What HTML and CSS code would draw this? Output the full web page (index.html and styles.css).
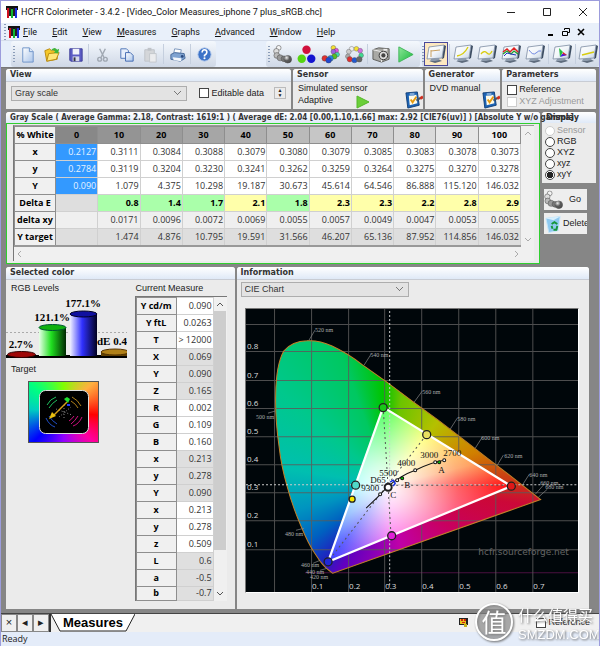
FILE: index.html
```html
<!DOCTYPE html>
<html lang="en">
<head>
<meta charset="utf-8">
<title>HCFR Colorimeter</title>
<link rel="stylesheet" href="styles.css">
</head>
<body>
<svg class="defs" aria-hidden="true">
  <defs>
    <linearGradient id="gBlue" x1="0" y1="0" x2="1" y2="1"><stop offset="0" stop-color="#fff"/><stop offset="1" stop-color="#a9c4ea"/></linearGradient>
    <linearGradient id="gPlay" x1="0" y1="0" x2="1" y2="1"><stop offset="0" stop-color="#8fe69a"/><stop offset="1" stop-color="#14b83a"/></linearGradient>
    <linearGradient id="gScreen" x1="0" y1="0" x2="1" y2="1"><stop offset="0" stop-color="#fff"/><stop offset=".5" stop-color="#f2f6fa"/><stop offset="1" stop-color="#c4d2e2"/></linearGradient>
    <radialGradient id="gBall" cx=".35" cy=".3" r=".8"><stop offset="0" stop-color="#fff" stop-opacity=".9"/><stop offset=".5" stop-color="#fff" stop-opacity=".1"/><stop offset="1" stop-color="#000" stop-opacity=".35"/></radialGradient>
    <symbol id="logo" viewBox="0 0 12 12"><path d="M0 0h12v4H0z" fill="#111"/><path d="M1 2h2v10H1z" fill="#d01020"/><path d="M5 3h2v9H5z" fill="#10b830"/><path d="M9 2h2v10H9z" fill="#1a2ce0"/><path d="M3 2h2v8H3zM7 2h2v8H7z" fill="#222"/></symbol>
    <symbol id="monitor" viewBox="0 0 22 20"><path d="M6 15l8-1 1 3-5 1-5-1z" fill="#8d9bac"/><path d="M4 17l6 2 7-2-2-1-5 1z" fill="#5e6b7c"/><path d="M19 1l2 1-2 12-2 1z" fill="#3b4b60"/><path d="M4 3L19 1 17 14 2 15z" fill="url(#gScreen)" stroke="#7c8ca2" stroke-width=".8"/></symbol>
    <symbol id="clip" viewBox="0 0 19 19"><path d="M1 2l12-1 2 14-12 3z" fill="#1c63b5" stroke="#124078"/><path d="M4 5l8-1 1 9-8 2z" fill="#fffbe8"/><path d="M5 2h5v3H5z" fill="#7aa6d6"/><path d="M6 9l2 3 4-6" fill="none" stroke="#e69a10" stroke-width="2"/><path d="M12 10l5-3" stroke="#456" stroke-width="2"/><path d="M16 8l3-2" stroke="#d03020" stroke-width="3"/></symbol>
    <symbol id="chain" viewBox="0 0 20 20"><g stroke="#555" stroke-width=".6"><circle cx="6" cy="3" r="2.500" fill="#f4f4f4"/><circle cx="3.500" cy="6.500" r="2.800" fill="#ddd"/><circle cx="4" cy="11" r="3" fill="#bbb"/><circle cx="7.500" cy="13.500" r="3.200" fill="#999"/><circle cx="11.500" cy="14.500" r="3" fill="#777"/><circle cx="15.500" cy="15" r="4" fill="#444"/></g><circle cx="15.500" cy="15" r="4" fill="url(#gBall)"/></symbol>
  </defs>
</svg>

<header class="titlebar">
  <svg class="logo"><use href="#logo"/></svg>
  <h1>HCFR Colorimeter - 3.4.2 - [Video_Color Measures_iphone 7 plus_sRGB.chc]</h1>
  <div class="winbtns">
    <button aria-label="Minimize"><svg viewBox="0 0 8 8"><path d="M0 4.5h8" stroke="#222"/></svg></button>
    <button aria-label="Maximize"><svg viewBox="0 0 8 8"><path d="M.5.5h7v7h-7z" fill="none" stroke="#222"/></svg></button>
    <button aria-label="Close"><svg viewBox="0 0 8 8"><path d="M0 0l8 8M8 0L0 8" stroke="#222"/></svg></button>
  </div>
</header>

<nav class="menubar">
  <i class="grip"></i>
  <svg class="logo"><use href="#logo"/></svg>
  <button><u>F</u>ile</button><button><u>E</u>dit</button><button><u>V</u>iew</button><button><u>M</u>easures</button><button><u>G</u>raphs</button><button><u>A</u>dvanced</button><button><u>W</u>indow</button><button><u>H</u>elp</button>
  <div class="mdibtns">
    <button aria-label="Minimize document"><svg viewBox="0 0 8 8"><path d="M1 7h5" stroke="#000" stroke-width="2"/></svg></button>
    <button aria-label="Restore document"><svg viewBox="0 0 8 8"><path d="M2.500 2V.5h5v4H6M.5 3.500h5v4h-5z" fill="none" stroke="#000"/></svg></button>
    <button aria-label="Close document"><svg viewBox="0 0 8 8"><path d="M1 1l6 6M7 1L1 7" stroke="#000" stroke-width="1.600"/></svg></button>
  </div>
</nav>

<div class="toolbar">
  <div class="group">
    <i class="grip"></i>
    <button aria-label="New"><svg viewBox="0 0 20 20"><path d="M5 3h7l4 4v11H5z" fill="url(#gBlue)" stroke="#6f93c8"/><path d="M12 3v4h4" fill="#dce8f8" stroke="#6f93c8"/></svg></button>
    <button aria-label="Open"><svg viewBox="0 0 20 20"><path d="M3 6l5-2 2 2h6v9L5 17z" fill="#f5c829" stroke="#b88a10"/><path d="M5 17l2-8 11-1-3 7z" fill="#ffe778" stroke="#b88a10"/><path d="M9 6q4-5 7-1l2-1-1 5-5-1 2-1q-2-3-5-1z" fill="#3fb53a"/></svg></button>
    <button aria-label="Save"><svg viewBox="0 0 20 20"><path d="M4 4h13v13H5l-1-1z" fill="#5b5bc4" stroke="#3c3c98"/><path d="M7 4h7v6H7z" fill="#f0f2fa"/><path d="M7 12h7v5H7z" fill="#d4d8ea"/><path d="M8 13h2v4H8z" fill="#334"/></svg></button>
    <i class="sep"></i>
    <button aria-label="Cut"><svg viewBox="0 0 20 20"><g fill="none" stroke="#a0a8b2" stroke-width="1.500"><path d="M7 4l5 10M13 4L8 14"/><circle cx="7" cy="15" r="2"/><circle cx="13" cy="15" r="2"/></g></svg></button>
    <button aria-label="Copy"><svg viewBox="0 0 20 20"><path d="M4 4h6l2 2v8H4z" fill="#e7effb" stroke="#5077b8"/><path d="M9 8h5l3 3v6H9z" fill="url(#gBlue)" stroke="#4068b0"/></svg></button>
    <button aria-label="Paste"><svg viewBox="0 0 20 20"><path d="M4 5h10v12H4z" fill="#d4d6d9" stroke="#bfc3c8"/><path d="M7 3h4v3H7z" fill="#bfc3c8"/><path d="M9 9h7v9H9z" fill="#ebecee" stroke="#c3c7cc"/></svg></button>
    <i class="sep"></i>
    <button aria-label="Print"><svg viewBox="0 0 20 20"><path d="M7 4l7 1-1 5-7-1z" fill="#fff" stroke="#7b97bd"/><path d="M3 10l4-2 10 1 1 5-5 3-10-2z" fill="#7fa3d1" stroke="#47699a"/><path d="M5 13l9 1v3l-8-1z" fill="#f3f7fc"/><circle cx="15" cy="12" r="1.500" fill="#2a4a80"/></svg></button>
    <i class="sep"></i>
    <button aria-label="Help"><svg viewBox="0 0 20 20"><circle cx="10" cy="10" r="7" fill="#3d73c8" stroke="#b9cdec"/><path d="M7.500 8q0-3 2.500-3t2.500 2.500Q12.500 9 10 11v1" fill="none" stroke="#fff" stroke-width="1.700"/><circle cx="10" cy="14" r="1.100" fill="#fff"/></svg></button>
  </div>
  <div class="group push">
    <i class="grip"></i>
    <button aria-label="Measure gray scale"><svg viewBox="0 0 20 20"><use href="#chain"/></svg></button>
    <button aria-label="Measure primaries"><svg viewBox="0 0 20 20"><circle cx="10" cy="5" r="4.400" fill="#d0103c"/><circle cx="5" cy="14.500" r="4.400" fill="#56d410"/><circle cx="15" cy="14.500" r="4.400" fill="#1414d0"/></svg></button>
    <button aria-label="Measure saturations"><svg viewBox="0 0 20 20"><g stroke="#444" stroke-width=".4"><circle cx="13" cy="3" r="2.500" fill="#f4e030"/><circle cx="16" cy="6" r="2.500" fill="#e050e0"/><circle cx="13" cy="7" r="2.500" fill="#9a60e0"/><circle cx="17" cy="10" r="2.500" fill="#40d8b0"/><circle cx="14" cy="12" r="2.800" fill="#58c020"/><circle cx="10" cy="14" r="3" fill="#208ce0"/><circle cx="4" cy="14" r="3" fill="#e03030"/><circle cx="8" cy="16" r="3" fill="#2048d0"/></g></svg></button>
    <button aria-label="Measure color checker"><svg viewBox="0 0 20 20"><g stroke="#555" stroke-width=".4"><circle cx="7" cy="4" r="2.500" fill="#eee"/><circle cx="4" cy="7" r="2.500" fill="#ccc"/><circle cx="12" cy="4" r="2.500" fill="#f4e030"/><circle cx="16" cy="6" r="2.500" fill="#d070e0"/><circle cx="17" cy="11" r="2.500" fill="#40d890"/><circle cx="3" cy="12" r="2.500" fill="#aaa"/><circle cx="5" cy="15" r="2.800" fill="#e03030"/><circle cx="10" cy="16" r="2.800" fill="#2058d0"/><circle cx="15" cy="15" r="3" fill="#666"/></g></svg></button>
    <i class="sep"></i>
    <button aria-label="Camera"><svg viewBox="0 0 20 20"><path d="M1 5l6-2 11 1v11l-8 3-9-3z" fill="#a9a9a5" stroke="#5c5c58"/><path d="M1 5l9 2v11" fill="none" stroke="#eee"/><circle cx="12" cy="11" r="4.500" fill="#ddd" stroke="#333"/><circle cx="12" cy="11" r="2.200" fill="#444"/><path d="M12 4h4v2h-4z" fill="#eee"/></svg></button>
    <button aria-label="Run"><svg viewBox="0 0 20 20"><path d="M3 2l15 8-15 8z" fill="url(#gPlay)" stroke="#3db556"/></svg></button>
  </div>
  <div class="group views">
    <i class="grip"></i>
    <button class="on" aria-label="Measures view"><svg viewBox="0 0 22 20"><use href="#monitor"/><path d="M6 7l9-1M6 6v7" stroke="#c9a060" fill="none"/></svg></button>
    <i class="sep"></i>
    <button aria-label="Luminance"><svg viewBox="0 0 22 20"><use href="#monitor"/><path d="M5 12q7-1 11-9" stroke="#d8cc10" stroke-width="1.300" fill="none"/></svg></button>
    <button aria-label="Gamma"><svg viewBox="0 0 22 20"><use href="#monitor"/><path d="M5 10q3-4 6-1t5-2" stroke="#d8cc10" stroke-width="1.300" fill="none"/></svg></button>
    <button aria-label="RGB levels"><svg viewBox="0 0 22 20"><use href="#monitor"/><path d="M3 8l4-3 3 3 4-4 4 4" stroke="#e02020" stroke-width="1.500" fill="none"/><path d="M3 10l4-3 4 3 3-3 4 3" stroke="#20a030" stroke-width="1.300" fill="none"/><path d="M4 12l3-3 4 1 5 1" stroke="#2030c0" fill="none"/></svg></button>
    <button aria-label="Color temperature"><svg viewBox="0 0 22 20"><use href="#monitor"/><path d="M5 6q4 6 7 3t5-2" stroke="#7088e0" fill="none"/></svg></button>
    <i class="sep"></i>
    <button aria-label="CIE chart"><svg viewBox="0 0 22 20"><use href="#monitor"/><path d="M8 4l4 4-3 5z" fill="#20c040"/><path d="M12 8l4 3-5 1z" fill="#e02020"/><path d="M9 13l2-3 5 1z" fill="#4020e0"/></svg></button>
    <i class="sep"></i>
    <button aria-label="Near black"><svg viewBox="0 0 22 20"><use href="#monitor"/><path d="M5 11l12-3" stroke="#d8cc10" stroke-width="1.300" fill="none"/></svg></button>
  </div>
</div>

<main class="work">
  <div class="row top">
    <section class="panel view">
      <h2>View</h2>
      <div class="body">
        <select aria-label="View"><option>Gray scale</option></select>
        <label><input type="checkbox">Editable data</label>
        <div class="spin"><button aria-label="Up">▲</button><button aria-label="Down">▼</button></div>
      </div>
    </section>
    <section class="panel sensor">
      <h2>Sensor</h2>
      <div class="body">
        <p>Simulated sensor<br>Adaptive</p>
        <button class="play" aria-label="Start"><svg viewBox="0 0 14 14"><path d="M1 1l12 6-12 6z" fill="#6ccf3a" stroke="#55b82a"/></svg></button>
        <button class="cfg" aria-label="Configure sensor"><svg><use href="#clip"/></svg></button>
      </div>
    </section>
    <section class="panel generator">
      <h2>Generator</h2>
      <div class="body">
        <p>DVD manual</p>
        <button class="cfg" aria-label="Configure generator"><svg><use href="#clip"/></svg></button>
      </div>
    </section>
    <section class="panel params">
      <h2>Parameters</h2>
      <div class="body stack">
        <label><input type="checkbox">Reference</label>
        <label class="off"><input type="checkbox" disabled>XYZ Adjustment</label>
      </div>
    </section>
  </div>

  <div class="row middle">
    <section class="panel gridpanel">
      <h2>Gray Scale ( Average Gamma: 2.18, Contrast: 1619:1 ) ( Average dE: 2.04 [0.00,1.10,1.66] max: 2.92 [CIE76(uv)] ) [Absolute Y w/o gamma]</h2>
      <div class="sheet">
        <div class="sheetrow">
          <table class="gray">
            <thead><tr><th>% White</th><th>0</th><th>10</th><th>20</th><th>30</th><th>40</th><th>50</th><th>60</th><th>70</th><th>80</th><th>90</th><th>100</th></tr></thead>
            <tbody>
              <tr><th>x</th><td>0.2127</td><td>0.3111</td><td>0.3084</td><td>0.3088</td><td>0.3079</td><td>0.3080</td><td>0.3079</td><td>0.3085</td><td>0.3083</td><td>0.3078</td><td>0.3073</td></tr>
              <tr><th>y</th><td>0.2784</td><td>0.3119</td><td>0.3204</td><td>0.3230</td><td>0.3241</td><td>0.3262</td><td>0.3259</td><td>0.3264</td><td>0.3275</td><td>0.3270</td><td>0.3278</td></tr>
              <tr><th>Y</th><td>0.090</td><td>1.079</td><td>4.375</td><td>10.298</td><td>19.187</td><td>30.673</td><td>45.614</td><td>64.546</td><td>86.888</td><td>115.120</td><td>146.032</td></tr>
              <tr class="delta"><th>Delta E</th><td></td><td>0.8</td><td>1.4</td><td>1.7</td><td class="warn">2.1</td><td>1.8</td><td class="warn">2.3</td><td class="warn">2.3</td><td class="warn">2.2</td><td class="warn">2.8</td><td class="warn">2.9</td></tr>
              <tr class="dxy"><th>delta xy</th><td></td><td>0.0171</td><td>0.0096</td><td>0.0072</td><td>0.0069</td><td>0.0055</td><td>0.0057</td><td>0.0049</td><td>0.0047</td><td>0.0053</td><td>0.0055</td></tr>
              <tr class="target"><th>Y target</th><td></td><td>1.474</td><td>4.876</td><td>10.795</td><td>19.591</td><td>31.566</td><td>46.207</td><td>65.136</td><td>87.952</td><td>114.856</td><td>146.032</td></tr>
            </tbody>
          </table>
          <div class="vscroll pale"><svg viewBox="0 0 8 8"><path d="M1 6l3-3 3 3"/></svg><svg viewBox="0 0 8 8"><path d="M1 2l3 3 3-3"/></svg></div>
        </div>
        <div class="hscroll"><svg viewBox="0 0 8 8"><path d="M5 1L2 4l3 3"/></svg><svg viewBox="0 0 8 8"><path d="M3 1l3 3-3 3"/></svg></div>
      </div>
    </section>
    <div class="side">
      <section class="panel display">
        <h2>Display</h2>
        <div class="stack">
          <label class="off"><input type="radio" name="space" disabled>Sensor</label>
          <label><input type="radio" name="space">RGB</label>
          <label><input type="radio" name="space">XYZ</label>
          <label><input type="radio" name="space">xyz</label>
          <label><input type="radio" name="space" checked>xyY</label>
        </div>
      </section>
      <button class="act"><svg viewBox="0 0 20 20"><use href="#chain"/></svg><span>Go</span></button>
      <button class="act"><svg viewBox="0 0 20 20"><path d="M2 4l15-2-2 15-10 2z" fill="#8ec9f0" stroke="#c7e6fa"/><path d="M2 4l8 2 7-4" fill="#d8effc"/><path d="M8 10l3-2 3 2M14 12l-1 4-3 0M9 15l-1-3" stroke="#16963a" stroke-width="2" fill="none"/></svg><span>Delete</span></button>
    </div>
  </div>

  <div class="row bottom">
    <section class="panel selected">
      <h2>Selected color</h2>
      <div class="cols">
        <div class="left">
          <h3>RGB Levels</h3>
          <svg class="levels" viewBox="0 0 121 61">
            <defs>
              <linearGradient id="bG"><stop offset="0" stop-color="#e8ffe8"/><stop offset=".45" stop-color="#20e020"/><stop offset="1" stop-color="#002800"/></linearGradient>
              <linearGradient id="bB"><stop offset="0" stop-color="#f0f0ff"/><stop offset=".45" stop-color="#3030ff"/><stop offset="1" stop-color="#000020"/></linearGradient>
            </defs>
            <path d="M0 35.500h121" stroke="#aaa" stroke-dasharray="2 2"/>
            <path d="M0 58h121v3H0z"/>
            <ellipse cx="15.500" cy="57.500" rx="14" ry="3" fill="#a00808" stroke="#300"/>
            <path d="M33 30h27v29H33z" fill="url(#bG)"/><ellipse cx="46.500" cy="30.500" rx="13.500" ry="3" fill="#10b010" stroke="#053"/>
            <path d="M64 17h27v42H64z" fill="url(#bB)"/><ellipse cx="77.500" cy="17" rx="13.500" ry="3" fill="#1010a0" stroke="#002"/>
            <path d="M95 55v4h26v-4" fill="#604000"/><ellipse cx="109" cy="55" rx="14" ry="3" fill="#b08018" stroke="#530"/>
            <g class="pct"><text x="15" y="51">2.7%</text><text x="46" y="24">121.1%</text><text x="77" y="10">177.1%</text><text class="start" x="91" y="48">dE 0.4</text></g>
          </svg>
          <h3>Target</h3>
          <div class="target-box">
            <svg viewBox="0 0 50 44"><rect x=".5" y=".5" width="49" height="43" rx="6" stroke="#ddd"/>
              <g fill="none"><g stroke="#20c060"><path d="M8 15q3-6 9-8M10 18q3-5 8-8"/></g><g stroke="#b08018"><path d="M33 7q6 3 9 9M32 11q5 3 7 7"/></g><g stroke="#2050c8"><path d="M7 28q3 7 9 9M10 26q3 5 8 8"/></g><g stroke="#d01080"><path d="M43 27q-3 7-9 9M39 26q-3 5-7 8M35 26q-2 3-5 5"/></g><path d="M17 19l16 6M25 15v13M20 27l12-10" stroke="#888" stroke-dasharray="1 2"/></g>
              <path d="M14 26l14-14" stroke="#d8a018" stroke-width="1.500"/><path d="M10 29l3-7 4 4z" fill="#e8c010"/><path d="M25 9l3-2 3 2-2 4z" fill="#20e030"/><path d="M28 14h3v2h-3z" fill="#2040ff"/></svg>
          </div>
        </div>
        <div class="right">
          <h3>Current Measure</h3>
          <div class="listbox">
            <table class="measure">
              <tr><th>Y cd/m</th><td>0.090</td></tr><tr><th>Y ftL</th><td>0.0263</td></tr><tr><th>T</th><td>&gt; 12000</td></tr>
              <tr class="alt"><th>X</th><td>0.069</td></tr><tr class="alt"><th>Y</th><td>0.090</td></tr><tr class="alt"><th>Z</th><td>0.165</td></tr>
              <tr><th>R</th><td>0.002</td></tr><tr><th>G</th><td>0.109</td></tr><tr><th>B</th><td>0.160</td></tr>
              <tr class="alt"><th>x</th><td>0.213</td></tr><tr class="alt"><th>y</th><td>0.278</td></tr><tr class="alt"><th>Y</th><td>0.090</td></tr>
              <tr><th>x</th><td>0.213</td></tr><tr><th>y</th><td>0.278</td></tr><tr><th>z</th><td>0.509</td></tr>
              <tr class="alt"><th>L</th><td>0.6</td></tr><tr class="alt"><th>a</th><td>-0.5</td></tr><tr class="alt"><th>b</th><td>-0.7</td></tr>
            </table>
            <div class="vscroll"><svg viewBox="0 0 8 8"><path d="M1 6l3-3 3 3"/></svg><i class="thumb"></i><svg viewBox="0 0 8 8"><path d="M1 2l3 3 3-3"/></svg></div>
          </div>
        </div>
      </div>
    </section>

    <section class="panel info">
      <h2>Information</h2>
      <select aria-label="Chart"><option>CIE Chart</option></select>
      <svg class="cie" viewBox="245 310 332 283" role="img" aria-label="CIE chromaticity chart">
        <defs>
          <path id="locus" d="M331.700 574Q324 569 319 562L313 553Q307 544 300 527Q291 506 286 487Q280 466 278 447Q274 420 274.700 395Q275 366 282.700 352Q291 342 306 341.700Q318 341 331 347Q346 354 361 365.500L385 382.500L411 402L437 421L463 441L486 459L507 475L539.300 500.300z"/>
          <clipPath id="cLocus"><use href="#locus"/></clipPath>
          <clipPath id="cTri"><path d="M382 408L510 487L327 562.500z"/></clipPath>
          <radialGradient id="gWhite" gradientUnits="userSpaceOnUse" cx="388" cy="486" r="115"><stop offset="0" stop-color="#fff"/><stop offset=".2" stop-color="#fff" stop-opacity=".8"/><stop offset=".6" stop-color="#fff" stop-opacity=".32"/><stop offset="1" stop-color="#fff" stop-opacity="0"/></radialGradient>
        </defs>
        <path d="M245 310h332v283H245z" fill="#00060a"/>
        <path d="M304 573.500h273" stroke="#4a1040"/>
        <g clip-path="url(#cLocus)"><foreignObject x="245" y="310" width="332" height="283"><div class="outer"></div></foreignObject></g>
        <path d="M273.500 310v283M310.500 310v283M347.500 310v283M383.500 310v283M420.500 310v283M457.500 310v283M494.500 310v283M531.500 310v283M245 325.500h332M245 352.500h332M245 381.500h332M245 409.500h332M245 437.500h332M245 465.500h332M245 493.500h332M245 521.500h332M245 550.500h332" stroke="#5a5a5a" stroke-opacity=".85" fill="none"/>
        <g clip-path="url(#cTri)"><foreignObject x="245" y="310" width="332" height="283"><div class="inner"></div></foreignObject><path d="M245 310h332v283H245z" fill="url(#gWhite)"/></g>
        <use href="#locus" fill="none" stroke="#c08028"/>
        <path d="M388.500 312v274M245 485.500h332" stroke="#ccc" stroke-dasharray="2 2"/>
        <path d="M382 408l8 130M425 436L327 562M355 486h155" stroke="#555" stroke-dasharray="2 3" fill="none"/>
        <path d="M382 408L510 487L327 562.500z" fill="none" stroke="#fff" stroke-width="2.200"/>
        <path d="M365 509Q376 499 387 487Q400 476 414 471Q430 463 443 461" fill="none" stroke="#111"/>
        <g stroke="#888" stroke-width=".7"><path d="M308 341l6-10M363 366l7-11M413 403l8-11M449 430l7-11M474 449l7-11M496 466l6-10M521 486l7-11M534 495l8-9M537 498l9-8M274 412l-7 2M303 529l-8 2M319 561l-7 3M326 569l-7 2"/></g>
        <g class="nm"><text x="314" y="333">520 nm</text><text x="369" y="358">540 nm</text><text x="421" y="395">560 nm</text><text x="456" y="422">580 nm</text><text x="480" y="441">600 nm</text><text x="503" y="459">620 nm</text><text x="528" y="478">640 nm</text><text x="539" y="486">660 nm</text><text x="544" y="490">680 nm</text><text x="255" y="420">500 nm</text><text x="284" y="537">480 nm</text><text x="300" y="568">460 nm</text><text x="305" y="575">440 nm</text><text x="309" y="580">420 nm</text></g>
        <g class="axis"><text x="246" y="350">0.8</text><text x="246" y="379">0.7</text><text x="246" y="407">0.6</text><text x="246" y="435">0.5</text><text x="246" y="463">0.4</text><text x="246" y="491">0.3</text><text x="246" y="519">0.2</text><text x="246" y="548">0.1</text><text x="311" y="590">0.1</text><text x="348" y="590">0.2</text><text x="384" y="590">0.3</text><text x="421" y="590">0.4</text><text x="458" y="590">0.5</text><text x="495" y="590">0.6</text><text x="532" y="590">0.7</text></g>
        <g stroke="#222" stroke-width="1.300"><circle cx="382" cy="408.500" r="4" fill="#18c818"/><circle cx="425.500" cy="435.500" r="4" fill="#e8e060"/><circle cx="510" cy="487" r="4" fill="#e01818"/><circle cx="390.500" cy="536.500" r="4" fill="#e020d8"/><circle cx="327" cy="562.500" r="4" fill="#2028d8"/><circle cx="354.500" cy="486" r="4" fill="#50d8c8"/><circle cx="351" cy="500" r="3" fill="#f8e800"/><circle cx="387" cy="488" r="3.500" fill="#fff" stroke-width="2"/></g>
        <path d="M389 483l3-2 2 3-2 3" fill="none" stroke="#1830e0" stroke-width="1.500"/>
        <g stroke="#111" fill="#fff"><circle cx="379" cy="495" r="1.500"/><circle cx="396" cy="481" r="1.500"/><circle cx="414" cy="471" r="1.500"/><circle cx="434" cy="463" r="1.500"/><circle cx="443" cy="461" r="1.500"/><circle cx="401" cy="479" r="1.500" fill="#0c0"/><circle cx="438" cy="463" r="1.500" fill="#0c0"/></g>
        <g class="temp"><text x="419" y="459">3000</text><text x="442" y="457">2700</text><text x="396" y="467">4000</text><text x="378" y="477">5500</text><text x="369" y="484">D65</text><text x="360" y="492">9300</text><text x="403" y="489">B</text><text x="389" y="499">C</text><text x="437" y="474">A</text></g>
        <text class="site" x="477" y="556">hcfr.sourceforge.net</text>
      </svg>
    </section>
  </div>
</main>

<footer class="tabs">
  <div class="nav"><button aria-label="Close tab">×</button><button aria-label="Previous tab">◂</button><button aria-label="Next tab">▸</button></div>
  <button class="tab"><svg viewBox="0 0 84 18" preserveAspectRatio="none"><path d="M0 0l9 17h66L84 0" fill="#fff" stroke="#222"/></svg><span>Measures</span></button>
  <div class="tail"><svg class="user" viewBox="0 0 9 9"><path d="M0 0h9v7H0z" fill="#222"/><path d="M1 1h6v5H1z" fill="#e8c018"/><path d="M2 1h2v2H2zM5 1h2v2H5zM3 4h3v1H3z" fill="#d02010"/><path d="M5 6h3v3H5z" fill="#c0b020"/></svg><label><input type="checkbox">Reference</label></div>
</footer>
<div class="status">Ready</div>

<svg class="stamp" viewBox="0 0 125 42" role="img" aria-label="什么值得买 SMZDM.COM">
  <circle cx="20" cy="21" r="18" fill="#999" fill-opacity=".45" stroke="#fff" stroke-width="2"/>
  <text class="big" x="20" y="31">值</text>
  <text class="cn" x="44" y="20">什么值得买</text>
  <text class="en" x="44" y="38">SMZDM.COM</text>
</svg>
</body>
</html>
```
FILE: styles.css
```css
* { box-sizing: border-box; }
body {
  margin: 0;
  min-height: 100vh;
  display: flex;
  flex-direction: column;
  position: relative;
  border: 1px solid #9c9cdc;
  background: #868686;
  color: #222;
  font: 9px/11px "Liberation Sans", sans-serif;
}
h1, h2, h3, p { margin: 0; font-size: inherit; font-weight: normal; }
button {
  margin: 0; padding: 0; border: 0; background: none;
  color: inherit; font: inherit;
}
svg { display: block; }
.defs { position: absolute; width: 0; height: 0; }
label { display: flex; align-items: center; gap: 2px; white-space: nowrap; }
input { appearance: none; flex: none; width: 10px; height: 10px; margin: 0; border: 1px solid #444; background: #fff; }
input[type="radio"] { border-radius: 50%; }
input[type="radio"]:checked { background: radial-gradient(circle, #222 0 3px, #fff 3px); }
input:disabled { border-color: #ccc; }
.off { color: #999; }
select {
  appearance: none; height: 15px; padding: 0 3px; border: 1px solid #adadad; border-radius: 0;
  color: #333; font: inherit;
  background:
    linear-gradient(45deg, transparent 45%, #777 45% 60%, transparent 60%) right 8px center / 4px 4px no-repeat,
    linear-gradient(-45deg, transparent 45%, #777 45% 60%, transparent 60%) right 5px center / 4px 4px no-repeat,
    #e3e3e3;
}

/* window chrome */
.titlebar { display: flex; align-items: center; height: 22px; padding: 0 12px 0 5px; gap: 3px; background: #fff; }
.titlebar h1 { flex: 1; min-width: 0; overflow: hidden; font: 9px/12px Roboto, sans-serif; color: #111; white-space: nowrap; }
.logo { width: 12px; height: 12px; }
.winbtns { display: flex; gap: 28px; }
.winbtns svg, .mdibtns svg { width: 8px; height: 8px; }
.menubar { display: flex; align-items: center; height: 17px; padding: 0 14px 0 3px; background: #e9f0fa; font: 9px/12px Roboto, sans-serif; color: #111; }
.menubar > button { margin-right: 15px; }
.menubar .logo { margin: 0 3px 0 2px; }
.mdibtns { display: flex; gap: 7px; margin-left: auto; }
.grip { flex: none; width: 2px; height: 16px; background: repeating-linear-gradient(#8a9cb8 0 1px, transparent 1px 3px); }

.toolbar { display: flex; height: 27px; padding-left: 10px; background: #e6eefa; overflow: hidden; border-top: 1px solid #d4dcea; }
.group { display: flex; align-items: center; border-radius: 3px; padding-left: 2px; background: linear-gradient(#f4f8fd, #cfd8e6); }
.group button { display: flex; align-items: center; justify-content: center; width: 24px; height: 24px; }
.group button svg { width: 19px; height: 19px; }
.views { padding-left: 0; }
.views button:last-child { width: 22px; }
.group button.on { border: 1px solid #4a4a9c; background: #fde8c0; }
.views button svg { width: 22px; height: 20px; flex: none; }
.push { margin-left: auto; margin-right: 2px; padding-right: 3px; }
.sep { width: 1px; height: 20px; margin: 0 1px; background: #c5cfde; }

/* panels */
.work { flex: 1; display: flex; flex-direction: column; gap: 3px; padding: 1px 3px 4px 5px; border-top: 1px solid #777; }
.row { display: flex; gap: 2px; }
.panel { min-width: 0; background: #ebebeb; border-radius: 3px 3px 0 0; }
.panel h2 {
  height: 13px; padding: 0 4px; border-bottom: 1px solid #c8ccd4; border-radius: 3px 3px 0 0;
  background: linear-gradient(#fff, #dfe9f7);
  font: bold 8px/12px "DejaVu Sans", sans-serif; color: #333; white-space: nowrap;
}
.body { display: flex; height: 27px; }
.stack { display: flex; flex-direction: column; }
.view { flex: 286 0 0; }
.view .body { align-items: center; padding: 0 5px 5px; }
.view select { flex: 1; max-width: 182px; }
.view label { margin: 0 10px 0 12px; }
.spin { display: flex; flex-direction: column; width: 12px; height: 12px; border: 1px solid #bbb; font-size: 5px; line-height: 5px; }
.sensor { flex: 130 0 0; }
.generator { flex: 76 0 0; }
.sensor .body, .generator .body { align-items: flex-end; padding-left: 5px; }
.body p { width: 58px; height: 27px; white-space: nowrap; line-height: 12px; }
.play svg { width: 14px; height: 14px; }
.cfg { margin-left: auto; }
.cfg svg { width: 18px; height: 18px; }
.generator p { width: 50px; }
.params { flex: 94 0 0; }
.params .stack { padding: 1px 5px; gap: 1px; justify-content: center; }

.gridpanel { flex: 1; position: relative; z-index: 1; }
.panel.gridpanel h2 { height: 11px; line-height: 11px; border: 0; font-family: "DejaVu Sans Condensed", "DejaVu Sans", sans-serif; }
.panel.display h2 { height: 11px; line-height: 11px; border: 0; }
.sheet { border: 1px solid #2fd02f; padding: 1px 5px 2px 6px; }
.sheetrow { display: flex; border-left: 1px solid #777; border-top: 1px solid #999; }
table { border-collapse: collapse; table-layout: fixed; width: 100%; font: 9px/12px "Open Sans", sans-serif; }
.gray { border-bottom: 2px solid #999; }
tr { height: 17px; }
th, td { padding: 0 1px; overflow: hidden; white-space: nowrap; }
th { border: 1px solid #8e8e8e; background: #f0f0f0; color: #000; font-weight: bold; }
td { border: 1px solid #d0d0d0; background: #fff; color: #333; text-align: right; }
.gray th:first-child { width: 41px; }
.gray thead th:nth-child(2) { background: #888; }
.gray thead th:nth-child(3) { background: #949494; }
.gray thead th:nth-child(4) { background: #9c9c9c; }
.gray thead th:nth-child(5) { background: #a6a6a6; }
.gray thead th:nth-child(6) { background: #b0b0b0; }
.gray thead th:nth-child(7) { background: #bababa; }
.gray thead th:nth-child(8) { background: #c6c6c6; }
.gray thead th:nth-child(9) { background: #d0d0d0; }
.gray thead th:nth-child(10) { background: #dadada; }
.gray thead th:nth-child(11) { background: #e6e6e6; }
.gray tr:nth-child(-n+3) td:nth-child(2) { background: #3399ff; color: #e8f3ff; }
.gray .delta td { background: #aaffaa; color: #000; font-weight: bold; }
.gray .delta .warn { background: #ffffaa; }
.gray .dxy td { background: #efefef; }
.gray .target td { background: #dedede; }
.gray .delta td:nth-child(2) { background: #dedede; }
.vscroll { flex: none; display: flex; flex-direction: column; align-items: center; justify-content: space-between; width: 13px; padding: 3px 0; background: #f0f0f0; }
.vscroll svg, .hscroll svg { width: 8px; height: 8px; fill: none; stroke: #555; }
.pale svg, .hscroll svg { stroke: #aaa; }
.hscroll { display: flex; justify-content: space-between; padding: 3px 14px 3px 2px; background: #f0f0f0; border-left: 1px solid #777; }

.side { flex: none; display: flex; flex-direction: column; width: 54px; }
.display { margin-bottom: 6px; }
.display .stack { padding: 2px 3px 3px; }
.act { display: flex; align-items: center; width: 43px; height: 21px; margin: 0 0 3px 2px; background: #eee; overflow: hidden; }
.act svg { flex: none; width: 19px; height: 20px; }
.act span { flex: 1; text-align: center; }

.bottom { flex: 1; padding-right: 7px; }
.selected { flex: 229 0 0; }
.info { flex: 353 0 0; padding-bottom: 15px; }
.cols { display: flex; justify-content: space-between; padding: 2px 8px 8px 0; }
h3 { padding: 0 5px; line-height: 12px; }
.left { width: 121px; }
.levels { width: 121px; height: 61px; margin: 3px 0 5px; overflow: hidden; }
.pct { font: bold 11px "Liberation Serif", serif; text-anchor: middle; }
.start { text-anchor: start; }
.target-box {
  display: flex; align-items: center; justify-content: center; width: 71px; height: 62px; margin: 6px 0 0 22px; border: 1px solid #555;
  background: conic-gradient(#80ff00, #ffb040 45deg, #ff0000 95deg, #ff00a0 135deg, #9000ff 180deg, #0000ff 225deg, #00d0c0 275deg, #00ff80 310deg, #80ff00);
}
.target-box svg { width: 50px; height: 44px; }
.right { width: 92px; }
.right h3 { padding: 0 1px; white-space: nowrap; }
.listbox { display: flex; margin-top: 2px; border-top: 1px solid #777; border-left: 1px solid #777; }
.measure th { width: 40px; }
.measure tr:last-child { height: 14px; }
.alt td { background: #dfdfdf; }
.thumb { flex: 1; width: 12px; margin: 3px 0 40px; background: #cdcdcd; }

.info select { display: block; width: 168px; margin: 2px 0 11px 4px; }
.cie { width: calc(100% - 18px); margin: 0 10px 0 8px; border: 1px solid #777; border-right-color: #fff; border-bottom-color: #fff; }
.outer, .inner { width: 332px; height: 283px; }
.outer { background: conic-gradient(from 356deg at 143px 176px, #00c400, #6cc400 12deg, #b4c000 41deg, #d08000 73deg, #c83018 94deg, #cc0838 102deg, #c80060 129deg, #c000a8 174deg, #6000c0 214deg, #2020c0 224deg, #0060c0 239deg, #0094c0 259deg, #00bfb0 283deg, #00c88c 315deg, #00c860 344deg, #00c400); }
.inner { background: conic-gradient(from 356deg at 143px 176px, #20ff30, #ffff30 41deg, #ff8838 80deg, #ff1818 94deg, #ff2068 124deg, #ff10e8 182deg, #2020ff 222deg, #3080ff 238deg, #30ffff 274deg, #20ff90 324deg, #20ff30); }
.nm { font: 6px "Liberation Serif", serif; fill: #aaa; }
.axis { font: 8px "Open Sans", sans-serif; fill: #ddd; }
.temp { font: 9px "Liberation Serif", serif; fill: #111; }
.site { font: 9px "DejaVu Sans", sans-serif; fill: #666; }

/* tabs and status */
.tabs { display: flex; height: 19px; background: #f0f0f0; border-top: 1px solid #444; }
.nav { display: flex; border-right: 2px solid #333; }
.nav button { width: 16px; border: 1px solid #888; font-size: 11px; }
.tab { position: relative; width: 84px; }
.tab svg { width: 100%; height: 18px; }
.tab span { position: absolute; inset: 0; font: bold 13px/18px "Liberation Sans", sans-serif; color: #000; }
.tail { display: flex; align-items: center; gap: 68px; margin-left: auto; padding-right: 9px; }
.user { width: 9px; height: 9px; }
.status { height: 14px; padding-left: 1px; background: #e4ecf9; font: 9px/14px "Open Sans", sans-serif; }
.stamp { position: absolute; right: 0; bottom: 3px; width: 125px; height: 42px; filter: drop-shadow(1px 1px 1px #666); }
.stamp text { fill: #fff; font-family: "Noto Sans CJK SC", sans-serif; }
.stamp .big { font-size: 25px; text-anchor: middle; }
.stamp .cn { font-size: 15px; }
.stamp .en { font: 13px "Liberation Sans", sans-serif; }
```
